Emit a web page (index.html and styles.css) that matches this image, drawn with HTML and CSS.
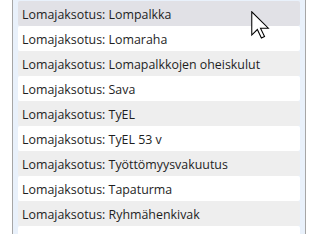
FILE: index.html
```html
<!DOCTYPE html>
<html lang="fi">
<head>
<meta charset="utf-8">
<link rel="stylesheet" href="styles.css">
</head>
<body>
<div class="list">
  <div class="row hover">Lomajaksotus: Lompalkka</div>
  <div class="row">Lomajaksotus: Lomaraha</div>
  <div class="row alt">Lomajaksotus: Lomapalkkojen oheiskulut</div>
  <div class="row">Lomajaksotus: Sava</div>
  <div class="row alt">Lomajaksotus: TyEL</div>
  <div class="row">Lomajaksotus: TyEL 53 v</div>
  <div class="row alt">Lomajaksotus: Työttömyysvakuutus</div>
  <div class="row">Lomajaksotus: Tapaturma</div>
  <div class="row alt">Lomajaksotus: Ryhmähenkivak</div>
  <div class="row"></div>
</div>
<svg class="cursor" width="19" height="28" viewBox="0 0 12.6 18.6">
  <path d="M0.5 0.5 L0.5 16 L4.2 12.3 L6.9 18 L9 17 L6.3 11.4 L11.5 11.4 Z" fill="#fff" stroke="#000" stroke-width="0.7" stroke-linejoin="miter"/>
</svg>
</body>
</html>
```
FILE: styles.css
```css
html, body {
  margin: 0;
  padding: 0;
  background: #ffffff;
  overflow: hidden;
}
body {
  width: 316px;
  height: 234px;
  position: relative;
  font-family: "Open Sans", "Noto Sans", sans-serif;
  font-size: 12.4px;
  color: #1e1e1e;
}
.list {
  margin-left: 12px;
  width: 294px;
  height: 234px;
  box-sizing: border-box;
  border-left: 1px solid #a6a6a6;
  border-right: 1px solid #a6a6a6;
  background: #e9f1fb;
  padding: 1px 5px 0 5px;
  display: flex;
  flex-direction: column;
}
.row {
  height: 25px;
  flex: 0 0 25px;
  box-sizing: border-box;
  padding-left: 4px;
  padding-top: 1px;
  display: flex;
  align-items: center;
  background: #ffffff;
  border-radius: 2px;
  white-space: nowrap;
}
.row.alt {
  background: #eeeeee;
}
.row.hover {
  background: #e1e1e6;
}
.cursor {
  position: absolute;
  left: 251px;
  top: 11px;
}
```
